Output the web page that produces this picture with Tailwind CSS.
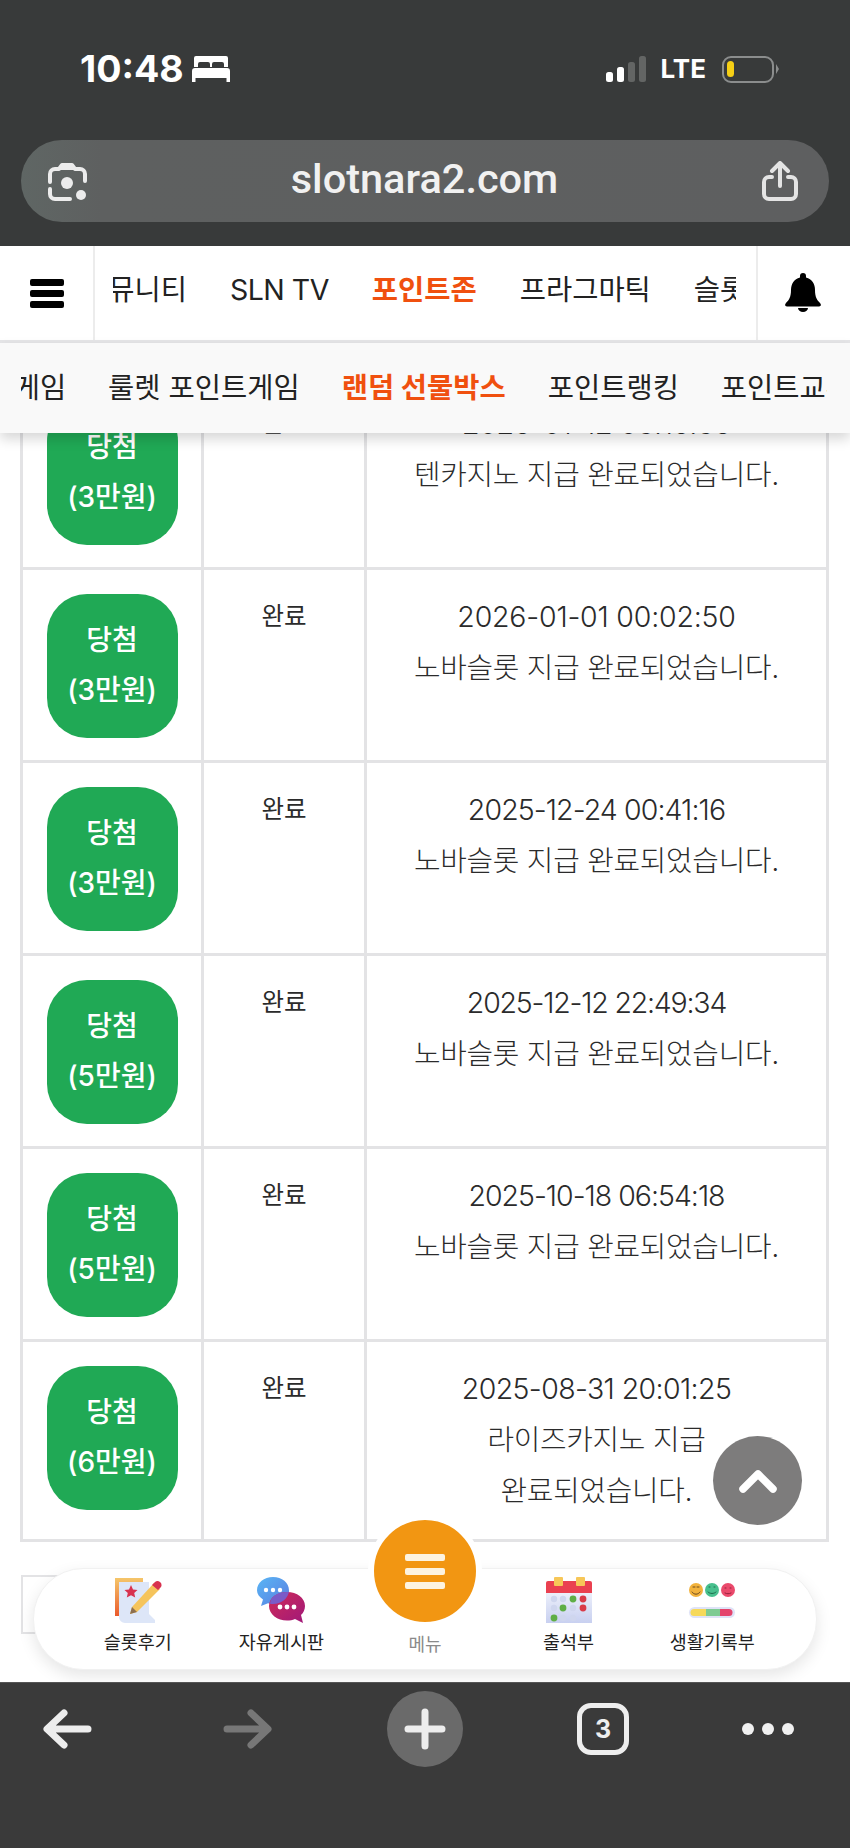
<!DOCTYPE html>
<html lang="ko">
<head>
    <meta charset="UTF-8">
    <meta name="viewport" content="width=device-width, initial-scale=1.0">
    <title>slotnara2.com</title>
    <script src="https://cdn.jsdelivr.net/npm/@tailwindcss/browser@4"></script>
</head>
<body class="bg-white">
<div class="relative w-[850px] h-[1848px] overflow-hidden flex flex-col bg-white text-[#222] font-['Inter','Noto_Sans_CJK_KR',sans-serif]">

    <!-- browser top -->
    <header class="h-[246px] shrink-0 bg-[#383a3a] flex flex-col">
        <div class="h-[140px] shrink-0 flex items-start justify-between pt-[49px] pl-[80px] pr-[71px]">
            <div class="flex items-center gap-[8px] h-[40px]">
                <span class="font-bold text-[37.500px] leading-[40px] text-white">10:48</span>
                <svg class="w-[38px] h-[26px]" viewBox="0 0 38 26" fill="#fff"><path d="M4 0h30a2 2 0 0 1 2 2v9h-4V8a2 2 0 0 0-2-2h-8a2 2 0 0 0-2 2v3h-2V8a2 2 0 0 0-2-2H8a2 2 0 0 0-2 2v3H2V2a2 2 0 0 1 2-2z"/><path d="M3 12h32a3 3 0 0 1 3 3v11h-3.500v-4h-31v4H0V15a3 3 0 0 1 3-3z"/></svg>
            </div>
            <div class="flex items-center h-[40px]">
                <svg class="w-[40px] h-[26px]" viewBox="0 0 40 26"><rect x="0" y="16" width="7" height="10" rx="2.500" fill="#fff"/><rect x="11" y="11" width="7" height="15" rx="2.500" fill="#fff"/><rect x="22" y="6" width="7" height="20" rx="2.500" fill="#636564"/><rect x="33" y="0" width="7" height="26" rx="2.500" fill="#636564"/></svg>
                <span class="ml-[15px] font-bold text-[26px] leading-[40px] text-white">LTE</span>
                <div class="ml-[16px] w-[52px] h-[27px] rounded-[9px] border-2 border-[#8b8d8d] flex items-center pl-[3px]">
                    <div class="w-[7px] h-[16px] rounded-full bg-[#f6cf15]"></div>
                </div>
                <div class="ml-[2px] w-0 h-0 border-y-[5px] border-y-transparent border-l-[3px] border-l-[#8b8d8d]"></div>
            </div>
        </div>
        <div class="mx-[21px] h-[82px] rounded-[41px] bg-[linear-gradient(90deg,#5f6664_0%,#5e6060_10%,#5e5f60_100%)] flex items-center justify-between pl-[27px] pr-[31px]">
            <svg class="w-[39px] h-[39px]" viewBox="0 0 39 39" fill="none" stroke="#ececec" stroke-width="4" stroke-linecap="round"><path d="M2 20v-8a5 5 0 0 1 5-5h4l3-4h10l3 4h5a5 5 0 0 1 5 5v7" stroke-linejoin="round"/><path d="M13 5h12v3H13z" fill="#ececec" stroke="none"/><path d="M2 27v5a5 5 0 0 0 5 5h15"/><circle cx="19" cy="21" r="6" fill="#ececec" stroke="none"/><circle cx="33" cy="33" r="5" fill="#ececec" stroke="none"/></svg>
            <span class="font-['Roboto',sans-serif] font-medium text-[41.500px] leading-[46px] text-[#f1f1f1] pb-[4px]">slotnara2.com</span>
            <svg class="w-[36px] h-[40px]" viewBox="0 0 36 40" fill="none" stroke="#e4e4e4" stroke-width="4" stroke-linecap="round" stroke-linejoin="round"><path d="M18 25V3M10 10l8-8 8 8"/><path d="M10 16H7a5 5 0 0 0-5 5v12a5 5 0 0 0 5 5h22a5 5 0 0 0 5-5V21a5 5 0 0 0-5-5h-3"/></svg>
        </div>
    </header>

    <!-- site nav -->
    <nav class="relative z-20 h-[97px] shrink-0 bg-white border-b-[3px] border-[#e6e6e8] flex items-stretch">
        <div class="w-[95px] shrink-0 border-r-2 border-[#ececec] flex flex-col justify-center gap-[4px] pl-[30px]">
            <div class="w-[34px] h-[7px] rounded-[2px] bg-black"></div>
            <div class="w-[34px] h-[7px] rounded-[2px] bg-black"></div>
            <div class="w-[34px] h-[7px] rounded-[2px] bg-black"></div>
        </div>
        <div class="flex-1 min-w-0 ml-[18px] mr-[20px] overflow-hidden">
            <ul class="flex items-center gap-[43px] h-full pb-[6px] ml-[-31px] text-[28.500px] leading-[40px] whitespace-nowrap">
                <li>커뮤니티</li>
                <li class="tracking-[-0.5px]">SLN TV</li>
                <li class="font-bold text-[#f0500f]">포인트존</li>
                <li>프라그마틱</li>
                <li>슬롯후기</li>
            </ul>
        </div>
        <div class="w-[94px] shrink-0 border-l-2 border-[#ececec] flex items-center pl-[27px] pb-[2px]">
            <svg class="w-[36px] h-[39px]" viewBox="0 0 36 39" fill="#000"><path d="M18 0a3 3 0 0 1 3 3v1.500C27 6 30 11 30 17c0 7 2 10 5 13 1.500 1.500 1 3.500-1 3.500H2c-2 0-2.500-2-1-3.500 3-3 5-6 5-13 0-6 3-11 9-12.500V3a3 3 0 0 1 3-3z"/><path d="M13 35h10a5 4 0 0 1-10 0z"/></svg>
        </div>
    </nav>

    <!-- sub nav -->
    <div class="relative z-20 h-[90px] shrink-0 bg-[#f9f9f9] shadow-[0_6px_12px_rgba(0,0,0,0.16)] pl-[21px] pr-[23px]">
        <div class="h-full overflow-hidden">
            <ul class="flex items-center gap-[42px] h-full ml-[-86px] text-[28.500px] leading-[40px] whitespace-nowrap">
                <li>포인트게임</li>
                <li>룰렛 포인트게임</li>
                <li class="font-bold text-[#f0500f]">랜덤 선물박스</li>
                <li>포인트랭킹</li>
                <li>포인트교환</li>
            </ul>
        </div>
    </div>

    <!-- content -->
    <main class="relative flex-1 min-h-0 overflow-hidden px-[20px]">
        <table class="mt-[-59px] w-[806px] table-fixed border-collapse text-center text-[#2b2b2b]">
            <colgroup>
                <col class="w-[181px]">
                <col class="w-[163px]">
                <col class="w-[462px]">
            </colgroup>
            <tbody>
                <tr>
                    <td class="border-[3px] border-[#e3e3e5] align-top pt-[24px] pb-[22px]"><div class="mx-auto w-[131px] h-[144px] pb-[2px] rounded-[40px] bg-[#20a955] text-white text-[28px] font-medium leading-[50px] flex flex-col justify-center"><span>당첨</span><span>(3만원)</span></div></td>
                    <td class="border-[3px] border-[#e3e3e5] align-top pt-[21px] text-[24.500px] leading-[51px]">완료</td>
                    <td class="border-[3px] border-[#e3e3e5] align-top pt-[21px] text-[28.900px] font-light leading-[51px] tracking-[-0.3px]"><span class="text-[28.500px]">2026-01-12 03:15:36</span><br>텐카지노 지급 완료되었습니다.</td>
                </tr>
                <tr>
                    <td class="border-[3px] border-[#e3e3e5] align-top pt-[24px] pb-[22px]"><div class="mx-auto w-[131px] h-[144px] pb-[2px] rounded-[40px] bg-[#20a955] text-white text-[28px] font-medium leading-[50px] flex flex-col justify-center"><span>당첨</span><span>(3만원)</span></div></td>
                    <td class="border-[3px] border-[#e3e3e5] align-top pt-[21px] text-[24.500px] leading-[51px]">완료</td>
                    <td class="border-[3px] border-[#e3e3e5] align-top pt-[21px] text-[28.900px] font-light leading-[51px] tracking-[-0.3px]"><span class="text-[28.500px] tracking-[-0.2px]">2026-01-01 00:02:50</span><br>노바슬롯 지급 완료되었습니다.</td>
                </tr>
                <tr>
                    <td class="border-[3px] border-[#e3e3e5] align-top pt-[24px] pb-[22px]"><div class="mx-auto w-[131px] h-[144px] pb-[2px] rounded-[40px] bg-[#20a955] text-white text-[28px] font-medium leading-[50px] flex flex-col justify-center"><span>당첨</span><span>(3만원)</span></div></td>
                    <td class="border-[3px] border-[#e3e3e5] align-top pt-[21px] text-[24.500px] leading-[51px]">완료</td>
                    <td class="border-[3px] border-[#e3e3e5] align-top pt-[21px] text-[28.900px] font-light leading-[51px] tracking-[-0.3px]"><span class="text-[28.500px] tracking-[-0.9px]">2025-12-24 00:41:16</span><br>노바슬롯 지급 완료되었습니다.</td>
                </tr>
                <tr>
                    <td class="border-[3px] border-[#e3e3e5] align-top pt-[24px] pb-[22px]"><div class="mx-auto w-[131px] h-[144px] pb-[2px] rounded-[40px] bg-[#20a955] text-white text-[28px] font-medium leading-[50px] flex flex-col justify-center"><span>당첨</span><span>(5만원)</span></div></td>
                    <td class="border-[3px] border-[#e3e3e5] align-top pt-[21px] text-[24.500px] leading-[51px]">완료</td>
                    <td class="border-[3px] border-[#e3e3e5] align-top pt-[21px] text-[28.900px] font-light leading-[51px] tracking-[-0.3px]"><span class="text-[28.500px] tracking-[-1.2px]">2025-12-12 22:49:34</span><br>노바슬롯 지급 완료되었습니다.</td>
                </tr>
                <tr>
                    <td class="border-[3px] border-[#e3e3e5] align-top pt-[24px] pb-[22px]"><div class="mx-auto w-[131px] h-[144px] pb-[2px] rounded-[40px] bg-[#20a955] text-white text-[28px] font-medium leading-[50px] flex flex-col justify-center"><span>당첨</span><span>(5만원)</span></div></td>
                    <td class="border-[3px] border-[#e3e3e5] align-top pt-[21px] text-[24.500px] leading-[51px]">완료</td>
                    <td class="border-[3px] border-[#e3e3e5] align-top pt-[21px] text-[28.900px] font-light leading-[51px] tracking-[-0.3px]"><span class="text-[28.500px] tracking-[-1px]">2025-10-18 06:54:18</span><br>노바슬롯 지급 완료되었습니다.</td>
                </tr>
                <tr>
                    <td class="border-[3px] border-[#e3e3e5] align-top pt-[24px] pb-[22px]"><div class="mx-auto w-[131px] h-[144px] pb-[2px] rounded-[40px] bg-[#20a955] text-white text-[28px] font-medium leading-[50px] flex flex-col justify-center"><span>당첨</span><span>(6만원)</span></div></td>
                    <td class="border-[3px] border-[#e3e3e5] align-top pt-[21px] text-[24.500px] leading-[51px]">완료</td>
                    <td class="border-[3px] border-[#e3e3e5] align-top pt-[21px] pb-[23px] text-[28.900px] font-light leading-[51px] tracking-[-0.3px]"><span class="text-[28.500px] tracking-[-0.6px]">2025-08-31 20:01:25</span><br>라이즈카지노 지급<br>완료되었습니다.</td>
                </tr>
            </tbody>
        </table>
        <div class="mt-[33px] ml-[1px] w-[60px] h-[59px] border-2 border-[#e3e3e5]"></div>

        <!-- scroll to top -->
        <button class="absolute z-10 left-[713px] top-[1003px] w-[89px] h-[89px] rounded-full bg-[#7d7c7c] flex items-center justify-center">
            <svg class="w-[38px] h-[24px]" viewBox="0 0 38 24" fill="none" stroke="#fff" stroke-width="7.500" stroke-linecap="round" stroke-linejoin="round"><path d="M4 20L19 5l15 15"/></svg>
        </button>

        <!-- floating bottom menu -->
        <div class="absolute z-10 left-[33px] bottom-[12px] w-[784px] h-[102px] rounded-[50px] bg-white border border-[#f1f1f1] shadow-[0_6px_16px_rgba(0,0,0,0.10)] grid grid-cols-5 px-[32px]">
            <a class="flex flex-col items-center pt-[8px]">
                <svg class="w-[48px] h-[46px]" viewBox="0 0 48 46">
                    <defs><linearGradient id="g1" x1="0" y1="0" x2="0" y2="1"><stop offset="0" stop-color="#f5c66a"/><stop offset="1" stop-color="#ea5a2c"/></linearGradient></defs>
                    <path d="M1 1h28v38H1z" fill="url(#g1)"/>
                    <path d="M5 5h30v32l6 6v3H11a6 6 0 0 1-6-6z" fill="#dde6f8"/>
                    <path d="M17 8l2 4.500 4.500.5-3.300 3 1 4.600-4.200-2.400-4.200 2.400 1-4.600-3.300-3 4.500-.5z" fill="#d8324f"/>
                    <path d="M18 30l22-24 6 6-23 23-7 2z" fill="#f5c45c"/>
                    <path d="M38 8l3-3a4 4 0 0 1 6 5l-3 3z" fill="#d8324f"/>
                    <path d="M18 30l5 5-7 2z" fill="#8d6f50"/>
                </svg>
                <span class="mt-[5px] text-[18.500px] leading-[28px]">슬롯후기</span>
            </a>
            <a class="flex flex-col items-center pt-[8px]">
                <svg class="w-[48px] h-[46px]" viewBox="0 0 48 46">
                    <defs>
                        <linearGradient id="g2" x1="0" y1="0" x2="1" y2="1"><stop offset="0" stop-color="#59b6f5"/><stop offset="1" stop-color="#5b7de0"/></linearGradient>
                        <linearGradient id="g3" x1="0" y1="0" x2="1" y2="1"><stop offset="0" stop-color="#d02c58"/><stop offset="1" stop-color="#a0187a"/></linearGradient>
                    </defs>
                    <path d="M16 0c9 0 16 5.500 16 13.500S25 27 16 27c-2 0-3.500-.2-5-.7L4 29l2-6.500C2.500 20 0 17 0 13.500 0 5.500 7 0 16 0z" fill="url(#g2)"/>
                    <path d="M30 15c10 0 18 6 18 14 0 3.500-1.500 7-4 9l2 8-8-4c-2.500 1-5 1.500-8 1.500-9.500 0-18-6-18-14.500S20.500 15 30 15z" fill="url(#g3)"/>
                    <path d="M32 14c-.5 7-7.500 13-16 13-1 0-2 0-3-.2C13 21 19 15 30 15c.7 0 1.400 0 2-1z" fill="#7a5bc8"/>
                    <g fill="#fff"><circle cx="9" cy="13" r="2.200"/><circle cx="16" cy="13" r="2.200"/><circle cx="23" cy="13" r="2.200"/><circle cx="23" cy="30" r="2.400"/><circle cx="30" cy="30" r="2.400"/><circle cx="37" cy="30" r="2.400"/></g>
                </svg>
                <span class="mt-[5px] text-[18.500px] leading-[28px]">자유게시판</span>
            </a>
            <a class="flex flex-col items-center justify-end pb-[10px]">
                <span class="text-[18px] leading-[28px] text-[#8a8a8a]">메뉴</span>
            </a>
            <a class="flex flex-col items-center pt-[8px]">
                <svg class="w-[48px] h-[46px]" viewBox="0 0 48 46">
                    <defs><linearGradient id="g4" x1="0" y1="0" x2="0" y2="1"><stop offset="0" stop-color="#eef1fb"/><stop offset="1" stop-color="#c8d0f0"/></linearGradient></defs>
                    <path d="M1 14h46v32H1z" fill="url(#g4)"/>
                    <path d="M3 4h42a2 2 0 0 1 2 2v10H1V6a2 2 0 0 1 2-2z" fill="#ea4050"/>
                    <rect x="9" y="0" width="9" height="9" rx="1" fill="#f7c758"/><rect x="31" y="0" width="9" height="9" rx="1" fill="#f7c758"/>
                    <g fill="#cfd6ee"><circle cx="9" cy="22" r="3.200"/><circle cx="18" cy="22" r="3.200"/><circle cx="9" cy="31" r="3.200"/><circle cx="28" cy="31" r="3.200"/><circle cx="18" cy="41" r="3.200"/><circle cx="28" cy="41" r="3.200"/></g>
                    <g fill="#5fae46"><circle cx="28" cy="22" r="3.400"/><circle cx="18" cy="31" r="3.400"/><circle cx="9" cy="41" r="3.400"/></g>
                    <g fill="#d93a48"><circle cx="38" cy="22" r="3.400"/><circle cx="38" cy="31" r="3.400"/></g>
                </svg>
                <span class="mt-[5px] text-[18.500px] leading-[28px]">출석부</span>
            </a>
            <a class="flex flex-col items-center pt-[8px]">
                <svg class="w-[48px] h-[46px]" viewBox="0 0 48 46">
                    <circle cx="8" cy="13" r="7" fill="#f2b23c"/><circle cx="24" cy="13" r="7" fill="#48c08e"/><circle cx="40" cy="13" r="7" fill="#ea4a6c"/>
                    <g fill="none" stroke="#6b4a20" stroke-width="1" stroke-linecap="round"><path d="M4 15c2 3 6 3 8 0M5 10h2M9 10h2"/><path d="M20 15c2 2 6 2 8 0M21 10h1M26 10h1" stroke="#1f6a4c"/><path d="M37 16c2 1 4 1 6 0M37 11h1M42 11h1" stroke="#96213c"/></g>
                    <rect x="1" y="30" width="46" height="11" rx="5.500" fill="#dfe3f7"/>
                    <path d="M6 32h12v7H6a3.500 3.500 0 0 1 0-7z" fill="#f6d95a"/><path d="M18 32h14v7H18z" fill="#7ecb92"/><path d="M32 32h9a3.500 3.500 0 0 1 0 7h-9z" fill="#e4446c"/>
                </svg>
                <span class="mt-[5px] text-[18.500px] leading-[28px]">생활기록부</span>
            </a>
        </div>

        <!-- round menu button -->
        <button class="absolute z-10 left-[368px] top-[1081px] w-[114px] h-[114px] rounded-full bg-[#f29612] border-[6px] border-white flex flex-col items-center justify-center gap-[7px]">
            <span class="w-[40px] h-[7px] rounded-[2px] bg-[#fdf3e0]"></span>
            <span class="w-[40px] h-[7px] rounded-[2px] bg-[#fdf3e0]"></span>
            <span class="w-[40px] h-[7px] rounded-[2px] bg-[#fdf3e0]"></span>
        </button>
    </main>

    <!-- browser bottom -->
    <footer class="h-[166px] shrink-0 bg-[#3a3a3a] border-t border-[#555] grid grid-cols-[1fr_auto_1fr] items-start">
        <div class="flex items-center h-[92px] pl-[42px] gap-[131px]">
            <svg class="w-[50px] h-[40px]" viewBox="0 0 50 40" fill="none" stroke="#ededed" stroke-width="7" stroke-linecap="round" stroke-linejoin="round"><path d="M46 20H6M22 4L5 20l17 16"/></svg>
            <svg class="w-[50px] h-[40px]" viewBox="0 0 50 40" fill="none" stroke="#777" stroke-width="7" stroke-linecap="round" stroke-linejoin="round"><path d="M4 20h40M28 4l17 16-17 16"/></svg>
        </div>
        <div class="mt-[8px] w-[76px] h-[76px] rounded-full bg-[#6a6a6a] flex items-center justify-center">
            <svg class="w-[42px] h-[42px]" viewBox="0 0 42 42" fill="none" stroke="#ededed" stroke-width="7" stroke-linecap="round"><path d="M21 4v34M4 21h34"/></svg>
        </div>
        <div class="flex items-center h-[92px] pl-[114px] gap-[113px]">
            <div class="w-[52px] h-[52px] rounded-[14px] border-[5px] border-[#eeeeee] flex items-center justify-center font-bold text-[25px] leading-none text-[#eeeeee]">3</div>
            <div class="flex items-center gap-[8px]">
                <span class="w-[12px] h-[12px] rounded-full bg-[#f0f0f0]"></span>
                <span class="w-[12px] h-[12px] rounded-full bg-[#f0f0f0]"></span>
                <span class="w-[12px] h-[12px] rounded-full bg-[#f0f0f0]"></span>
            </div>
        </div>
    </footer>
</div>
</body>
</html>
